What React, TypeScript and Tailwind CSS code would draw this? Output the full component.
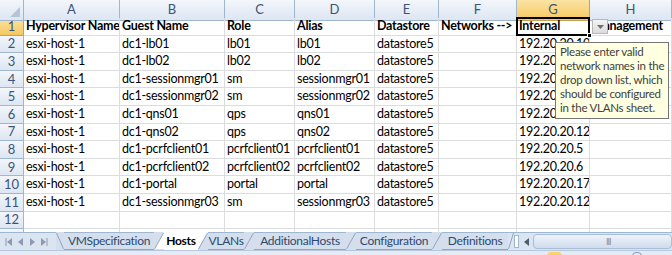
const font = { fontFamily: "Lato, 'Liberation Sans', sans-serif" };

const colLetters = ["A", "B", "C", "D", "E", "F", "G", "H"];

const rows: string[][] = [
  ["Hypervisor Name", "Guest Name", "Role", "Alias", "Datastore", "Networks -->", "Internal", "Management"],
  ["esxi-host-1", "dc1-lb01", "lb01", "lb01", "datastore5", "", "192.20.20.10", ""],
  ["esxi-host-1", "dc1-lb02", "lb02", "lb02", "datastore5", "", "192.20.20.11", ""],
  ["esxi-host-1", "dc1-sessionmgr01", "sm", "sessionmgr01", "datastore5", "", "192.20.20.13", ""],
  ["esxi-host-1", "dc1-sessionmgr02", "sm", "sessionmgr02", "datastore5", "", "192.20.20.14", ""],
  ["esxi-host-1", "dc1-qns01", "qps", "qns01", "datastore5", "", "192.20", ""],
  ["esxi-host-1", "dc1-qns02", "qps", "qns02", "datastore5", "", "192.20.20.12", ""],
  ["esxi-host-1", "dc1-pcrfclient01", "pcrfclient01", "pcrfclient01", "datastore5", "", "192.20.20.5", ""],
  ["esxi-host-1", "dc1-pcrfclient02", "pcrfclient02", "pcrfclient02", "datastore5", "", "192.20.20.6", ""],
  ["esxi-host-1", "dc1-portal", "portal", "portal", "datastore5", "", "192.20.20.17", ""],
  ["esxi-host-1", "dc1-sessionmgr03", "sm", "sessionmgr03", "datastore5", "", "192.20.20.12", ""],
  ["", "", "", "", "", "", "", ""],
  ["", "", "", "", "", "", "", ""],
];

const gridCols = "grid grid-cols-[24px_96px_105px_70px_80px_64px_78px_73px_1fr]";

const tabs = [
  { name: "VMSpecification", w: "w-[90px]" },
  { name: "Hosts", w: "w-[34px]" },
  { name: "VLANs", w: "w-[36px]" },
  { name: "AdditionalHosts", w: "w-[92px]" },
  { name: "Configuration", w: "w-[76px]" },
  { name: "Definitions", w: "w-[66px]" },
];

function Slant({ leftActive, rightActive }: { leftActive?: boolean; rightActive?: boolean }) {
  return (
    <svg width="10" height="18" viewBox="0 0 10 18" className="shrink-0 -mt-px">
      <path d="M0 0 L10 0 L10 18 L0 18 Z" fill="#d4deec" />
      {leftActive && <path d="M0 0 L10 0 L0 17 Z" fill="#ffffff" />}
      {rightActive && <path d="M10 0 L10 17 L0 17 Z" fill="#ffffff" />}
      <path d="M0.5 17 L9.5 1" stroke="#8fa6c2" strokeWidth="1" fill="none" />
    </svg>
  );
}

function SheetTabs() {
  return (
    <div className="h-[18px] flex items-stretch bg-[#dbe5f2] border-t border-[#9eb6ce] text-[12px] tracking-[-0.3px] text-[#2c4a70]">
      {/* navigation arrows */}
      <div className="w-[56px] flex items-center gap-[5px] pl-[5px] shrink-0">
        <svg width="8" height="8" viewBox="0 0 8 8"><path d="M1 0v8" stroke="#8a9bb3" /><path d="M7 0L2 4l5 4z" fill="#8a9bb3" /></svg>
        <svg width="6" height="8" viewBox="0 0 6 8"><path d="M5 0L0 4l5 4z" fill="#8a9bb3" /></svg>
        <svg width="6" height="8" viewBox="0 0 6 8"><path d="M1 0l5 4-5 4z" fill="#8a9bb3" /></svg>
        <svg width="8" height="8" viewBox="0 0 8 8"><path d="M1 0l5 4-5 4z" fill="#8a9bb3" /><path d="M7 0v8" stroke="#8a9bb3" /></svg>
      </div>
      <svg width="8" height="18" viewBox="0 0 8 18" className="shrink-0 -mt-px">
        <path d="M0 0 L8 0 L8 18 L0 18 Z" fill="#d4deec" />
        <path d="M0.5 1 L7.5 17" stroke="#8fa6c2" fill="none" />
      </svg>
      {tabs.map((t, i) => (
        <div key={t.name} className="flex items-stretch shrink-0">
          <div
            className={
              t.name === "Hosts"
                ? `${t.w} flex items-center justify-center bg-white font-bold text-black -mt-px`
                : `${t.w} flex items-center justify-center bg-[#d4deec] border-b border-[#8fa6c2]`
            }
          >
            {t.name}
          </div>
          {i < tabs.length - 1 && (
            <Slant leftActive={t.name === "Hosts"} rightActive={tabs[i + 1].name === "Hosts"} />
          )}
        </div>
      ))}
      <svg width="6" height="18" viewBox="0 0 6 18" className="shrink-0 -mt-px">
        <path d="M0.5 17 L5.5 1" stroke="#8fa6c2" fill="none" />
      </svg>
      {/* splitter */}
      <div className="w-[5px] my-[2px] border border-[#9eb6ce] bg-white shrink-0" />
      <div className="w-[14px] flex items-center justify-center shrink-0">
        <svg width="5" height="8" viewBox="0 0 5 8"><path d="M5 0L0 4l5 4z" fill="#4c5d74" /></svg>
      </div>
      <div className="flex-1 my-[1px] rounded-sm border border-[#a9bdd6] bg-gradient-to-b from-[#eef3fa] to-[#cfdcee] flex items-center pl-[72px] text-[9px] text-[#8090a8] tracking-[-1px]">
        III
      </div>
    </div>
  );
}

export default function App() {
  return (
    <div className="w-[672px] h-[255px] overflow-hidden bg-white flex flex-col relative" style={font}>
      <div className="flex-1 overflow-hidden">
        {/* column headers */}
        <div className={`${gridCols} h-[18px] text-[13px] text-[#3c5478]`}>
          <div className="bg-gradient-to-b from-[#f3f6fb] to-[#dde6f2] border-r border-b border-[#9eb6ce] relative">
            <svg width="12" height="12" viewBox="0 0 12 12" className="absolute right-[2px] bottom-[2px]">
              <path d="M11 1 L11 11 L1 11 Z" fill="#b5c4d6" />
            </svg>
          </div>
          {colLetters.map((c) => (
            <div
              key={c}
              className={
                c === "G"
                  ? "flex items-center justify-center border-r border-b border-[#c9a04c] bg-gradient-to-b from-[#fbe3a3] to-[#f5c85c]"
                  : "flex items-center justify-center border-r border-b border-[#9eb6ce] bg-gradient-to-b from-[#f3f6fb] to-[#dde6f2]"
              }
            >
              {c}
            </div>
          ))}
        </div>
        {rows.map((r, ri) => (
          <div key={ri} className={`${gridCols} h-[17.6px] text-[12.5px] tracking-[-0.25px] leading-none`}>
            <div
              className={
                ri === 0
                  ? "flex items-center justify-center text-[13px] tracking-normal text-[#3c5478] border-r border-b border-[#c9a04c] bg-gradient-to-b from-[#fbe3a3] to-[#f5c85c]"
                  : "flex items-center justify-center text-[13px] tracking-normal text-[#3c5478] border-r border-b border-[#9eb6ce] bg-gradient-to-b from-[#f3f6fb] to-[#dde6f2]"
              }
            >
              {ri + 1}
            </div>
            {r.map((v, ci) => (
              <div
                key={ci}
                className={
                  ri === 0 && ci === 6
                    ? "relative flex items-center pl-[2px] font-bold text-black border-r border-b border-[#dadcdd] whitespace-nowrap"
                    : ri === 0
                    ? "flex items-center pl-[2px] font-bold text-black border-r border-b border-[#dadcdd] whitespace-nowrap overflow-hidden"
                    : "flex items-center pl-[2px] text-black border-r border-b border-[#dadcdd] whitespace-nowrap overflow-hidden"
                }
              >
                {v}
                {ri === 0 && ci === 6 && (
                  <>
                    <div className="absolute -left-px -top-px -right-px -bottom-px border-2 border-black pointer-events-none" />
                    <div className="absolute -right-[3px] -bottom-[3px] w-[5px] h-[5px] bg-black border border-white" />
                  </>
                )}
              </div>
            ))}
          </div>
        ))}
      </div>
      <SheetTabs />
      <div className="h-[5px] bg-[#e4ebf5] border-t border-[#b8c8dc] relative">
        <div className="absolute left-[547px] top-[1px] w-[15px] h-[4px] bg-[#f7d36a] rounded-t-sm" />
        <div className="absolute left-[632px] top-[1px] w-[10px] h-[8px] rounded-full border border-[#8a9bb3]" />
      </div>

      {/* dropdown button of the validation list */}
      <div className="absolute left-[592px] top-[19px] w-[16px] h-[15px] bg-gradient-to-b from-[#f4f4f4] to-[#dcdcdc] border border-[#b8b8b8] flex items-center justify-center">
        <svg width="7" height="4" viewBox="0 0 7 4"><path d="M0 0h7L3.5 4z" fill="#6f6f6f" /></svg>
      </div>

      {/* input message */}
      <div className="absolute left-[555px] top-[42px] w-[114px] h-[77px] bg-[#ffffe1] border border-[#767676] pl-[4px] pt-[2px] text-[11.5px] tracking-[-0.25px] leading-[14px] text-[#404040] whitespace-nowrap">
        Please enter valid
        <br />
        network names in the
        <br />
        drop down list, which
        <br />
        should be configured
        <br />
        in the VLANs sheet.
      </div>
    </div>
  );
}
